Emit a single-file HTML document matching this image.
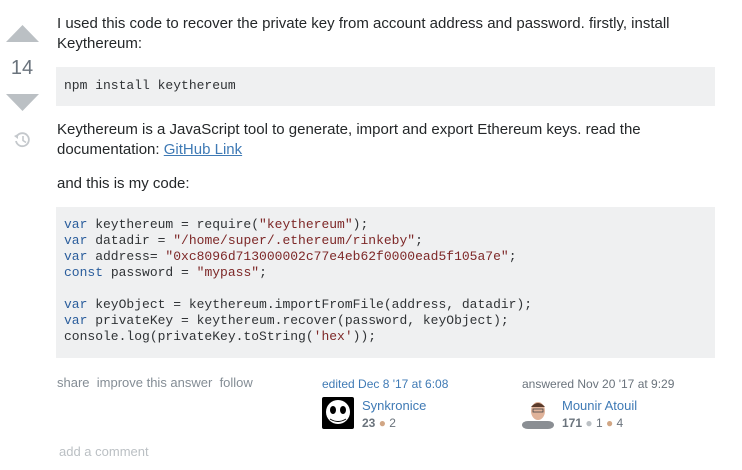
<!DOCTYPE html>
<html><head><meta charset="utf-8"><style>
body{margin:0;background:#fff;width:742px;height:470px;overflow:hidden;font-family:"Liberation Sans",Arial,sans-serif;color:#242729;position:relative}
.a{position:absolute}
p{margin:0;font-size:15px;line-height:20px}
pre{margin:0;background:#eff0f1;font-family:"Liberation Mono",monospace;font-size:13px;line-height:16px;padding:0 8px;box-sizing:border-box;color:#303336}
.k{color:#2a5d9c}.s{color:#7d2727}
.m{font-size:13px;color:#848d95}
</style></head><body>
<svg class="a" style="left:6px;top:25px" width="33" height="17"><polygon points="0,17 16.5,0 33,17" fill="#bbc0c4"/></svg>
<div class="a" style="left:0;top:57px;width:44px;text-align:center;font-size:20px;color:#6a737c">14</div>
<svg class="a" style="left:6px;top:94px" width="33" height="17"><polygon points="0,0 16.5,17 33,0" fill="#bbc0c4"/></svg>
<svg class="a" style="left:12px;top:130px" width="20" height="20" viewBox="0 0 20 20"><path d="M5 6 A6.5 6.5 0 1 1 4 11" fill="none" stroke="#c4c8cc" stroke-width="1.8"/><path d="M2 6 L6 9 L6 4 Z" fill="#c4c8cc"/><path d="M11 6v4.5l3 2" fill="none" stroke="#c4c8cc" stroke-width="1.6"/></svg>
<p class="a" style="left:57px;top:14px;width:660px">I used this code to recover the private key from account address and password. firstly, install Keythereum:</p>
<pre class="a" style="left:56px;top:67px;width:659px;height:39px;padding-top:11px">npm install keythereum</pre>
<p class="a" style="left:57px;top:120px;width:660px">Keythereum is a JavaScript tool to generate, import and export Ethereum keys. read the documentation: <a style="color:#3f7ab5;text-decoration:underline">GitHub Link</a></p>
<p class="a" style="left:57px;top:174px">and this is my code:</p>
<pre class="a" style="left:56px;top:207px;width:659px;height:151px;padding-top:10px"><span class="k">var</span> keythereum = require(<span class="s">"keythereum"</span>);
<span class="k">var</span> datadir = <span class="s">"/home/super/.ethereum/rinkeby"</span>;
<span class="k">var</span> address= <span class="s">"0xc8096d713000002c77e4eb62f0000ead5f105a7e"</span>;
<span class="k">const</span> password = <span class="s">"mypass"</span>;

<span class="k">var</span> keyObject = keythereum.importFromFile(address, datadir);
<span class="k">var</span> privateKey = keythereum.recover(password, keyObject);
console.log(privateKey.toString(<span class="s">'hex'</span>));</pre>
<div class="a m" style="left:57px;top:375px">share &nbsp;improve this answer &nbsp;follow</div>
<div class="a" style="left:322px;top:377px;font-size:12px;color:#3f7ab5">edited Dec 8 '17 at 6:08</div>
<div class="a" style="left:322px;top:397px;width:32px;height:32px;background:#000;border-radius:2px"><svg width="32" height="32"><ellipse cx="16" cy="15" rx="12" ry="12" fill="#fff"/><ellipse cx="11" cy="13" rx="3" ry="4" fill="#000"/><ellipse cx="21" cy="13" rx="3" ry="4" fill="#000"/><path d="M8 22 Q16 27 24 22" stroke="#000" fill="none"/></svg></div>
<div class="a" style="left:362px;top:398px;font-size:13px;color:#3f7ab5">Synkronice</div>
<div class="a" style="left:362px;top:416px;font-size:12px;color:#6a737c"><b>23</b> <span style="color:#d1a684">●</span> 2</div>
<div class="a" style="left:522px;top:377px;font-size:12px;color:#6a737c">answered Nov 20 '17 at 9:29</div>
<div class="a" style="left:522px;top:397px;width:32px;height:32px;background:#fff"><svg width="32" height="32"><rect x="0" y="24" width="32" height="8" rx="6" fill="#8a8e93"/><ellipse cx="16" cy="14" rx="7" ry="9" fill="#e0b39a"/><path d="M9 10 Q16 2 23 10" fill="#5a3b2b"/><rect x="11" y="12" width="10" height="3" fill="none" stroke="#444" stroke-width="0.8"/></svg></div>
<div class="a" style="left:562px;top:398px;font-size:13px;color:#3f7ab5">Mounir Atouil</div>
<div class="a" style="left:562px;top:416px;font-size:12px;color:#6a737c"><b>171</b> <span style="color:#bbc0c4">●</span> 1 <span style="color:#d1a684">●</span> 4</div>
<div class="a" style="left:59px;top:444px;font-size:13px;color:#bbc0c4">add a comment</div>
</body></html>
